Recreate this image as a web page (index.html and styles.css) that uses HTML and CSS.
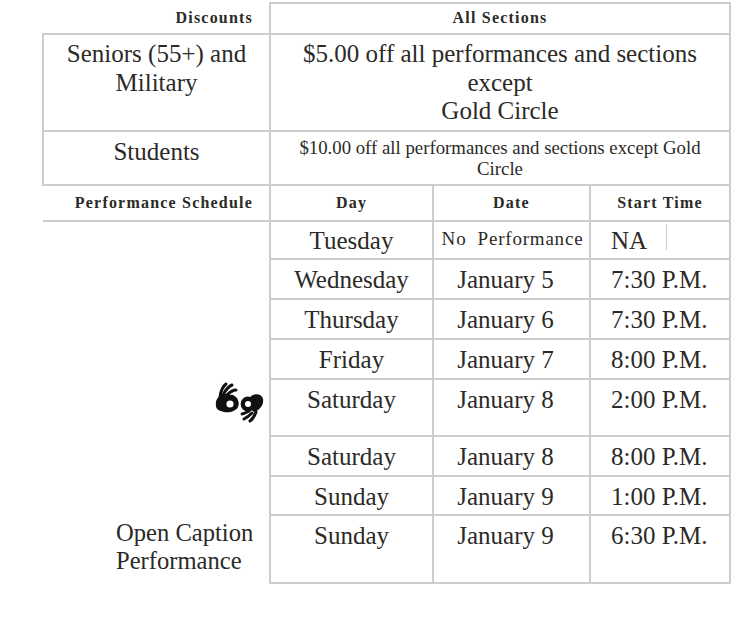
FILE: index.html
```html
<!DOCTYPE html>
<html>
<head>
<meta charset="utf-8">
<link rel="stylesheet" href="styles.css">
</head>
<body>
<table class="sched">
  <colgroup>
    <col class="c1"><col class="c2"><col class="c3"><col class="c4">
  </colgroup>
  <tr class="r-hd1">
    <td class="hd hd-left first">Discounts</td>
    <td class="hd" colspan="3">All Sections</td>
  </tr>
  <tr class="r-sen">
    <td class="big">Seniors (55+) and<br>Military</td>
    <td class="big" colspan="3">$5.00 off all performances and sections<br>except<br>Gold Circle</td>
  </tr>
  <tr class="r-stu">
    <td class="big stu">Students</td>
    <td class="small" colspan="3">$10.00 off all performances and sections except Gold<br>Circle</td>
  </tr>
  <tr class="r-hd2">
    <td class="hd hd-left noleft">Performance Schedule</td>
    <td class="hd">Day</td>
    <td class="hd">Date</td>
    <td class="hd">Start Time</td>
  </tr>
  <tr class="r-38">
    <td class="blank"></td>
    <td class="day tue">Tuesday</td>
    <td class="date nop">No&nbsp; Performance</td>
    <td class="time na">NA<span class="tick"></span></td>
  </tr>
  <tr class="r-40">
    <td class="blank"></td>
    <td class="day">Wednesday</td>
    <td class="date">January 5</td>
    <td class="time">7:30 P.M.</td>
  </tr>
  <tr class="r-40">
    <td class="blank"></td>
    <td class="day">Thursday</td>
    <td class="date">January 6</td>
    <td class="time">7:30 P.M.</td>
  </tr>
  <tr class="r-40">
    <td class="blank"></td>
    <td class="day">Friday</td>
    <td class="date">January 7</td>
    <td class="time">8:00 P.M.</td>
  </tr>
  <tr class="r-57">
    <td class="blank asl-cell">
      <svg class="asl" viewBox="3 3 52 44" width="52" height="44" aria-label="ASL interpreted">
        <g fill="#111">
          <path d="M5,30 C4,23 8,19 14,18 L22,19 C27,21 29,27 27,31 C25,35 19,37 13,36 C8,35 5,33 5,30 Z"/>
          <circle cx="37" cy="28" r="7.4"/>
          <path d="M40,20 C45,17 51,18 52,23 C53,29 49,34 43,36 L39,33 Z"/>
        </g>
        <g fill="none" stroke="#111" stroke-width="3" stroke-linecap="round">
          <path d="M9,21 Q10,12 15,8"/>
          <path d="M12,19 Q16,11 21,9"/>
          <path d="M16,19 Q21,14 25,14"/>
          <path d="M38,35 Q35,37 31,38"/>
          <path d="M41,37 Q37,41 33,43"/>
          <path d="M45,36 Q43,42 39,45"/>
        </g>
        <g fill="#fff">
          <circle cx="19" cy="28" r="3.6"/>
          <circle cx="37" cy="28" r="3"/>
        </g>
      </svg>
    </td>
    <td class="day">Saturday</td>
    <td class="date">January 8</td>
    <td class="time">2:00 P.M.</td>
  </tr>
  <tr class="r-40">
    <td class="blank"></td>
    <td class="day">Saturday</td>
    <td class="date">January 8</td>
    <td class="time">8:00 P.M.</td>
  </tr>
  <tr class="r-39">
    <td class="blank"></td>
    <td class="day">Sunday</td>
    <td class="date">January 9</td>
    <td class="time">1:00 P.M.</td>
  </tr>
  <tr class="r-68">
    <td class="blank oc">Open Caption<br>Performance</td>
    <td class="day">Sunday</td>
    <td class="date">January 9</td>
    <td class="time">6:30 P.M.</td>
  </tr>
</table>
</body>
</html>
```

FILE: styles.css
```css
html, body {
  margin: 0;
  padding: 0;
  background: #ffffff;
}

.sched {
  border-collapse: collapse;
  table-layout: fixed;
  width: 687px;
  margin: 2px 0 0 42px;
  color: #2b2a27;
  font-family: "Liberation Serif", "Times New Roman", serif;
}

.c1 { width: 227px; }
.c2 { width: 163px; }
.c3 { width: 157px; }
.c4 { width: 140px; }

.sched td {
  border: 2px solid #cdcdcd;
  padding: 6px 4px 0;
  vertical-align: top;
  text-align: center;
  font-size: 25px;
  line-height: 28px;
}

.sched td.hd {
  font-size: 16px;
  line-height: 18px;
  font-weight: bold;
  letter-spacing: 1.2px;
  vertical-align: middle;
  padding: 0 4px 1px;
}

.sched td.hd-left {
  text-align: right;
  padding-right: 16px;
}

.sched td.first {
  border-top: none;
  border-left: none;
}

.sched td.noleft {
  border-left: none;
}

.sched td.big {
  padding-top: 5px;
  line-height: 28.5px;
}

.sched td.stu {
  padding-top: 6px;
}

.sched td.small {
  font-size: 18.8px;
  line-height: 21px;
  padding-top: 5px;
}

.sched td.blank {
  border: none;
}

.sched td.asl-cell {
  text-align: right;
  padding: 0 3px 0 0;
}

.asl {
  display: inline-block;
  vertical-align: top;
}

.sched td.oc {
  text-align: left;
  font-size: 24.6px;
  padding: 4px 0 0 73px;
}

.sched td.tue {
  padding-top: 5px;
}

.sched td.date {
  padding-right: 14px;
  padding-left: 2px;
}

.sched td.nop {
  font-size: 19px;
  line-height: 22px;
  letter-spacing: 0.8px;
  padding: 6px 0 0 2px;
}

.sched td.time {
  text-align: left;
  padding-left: 20px;
}

.sched td.na {
  padding-top: 5px;
}

.tick {
  display: inline-block;
  width: 0;
  height: 26px;
  border-left: 1px solid #cdcdcd;
  margin-left: 19px;
  vertical-align: top;
  margin-top: -3px;
}

.r-hd1 { height: 31px; }
.r-sen { height: 97px; }
.r-stu { height: 54px; }
.r-hd2 { height: 36px; }
.r-38 { height: 38px; }
.r-40 { height: 40px; }
.r-39 { height: 39px; }
.r-57 { height: 57px; }
.r-68 { height: 68px; }
```
